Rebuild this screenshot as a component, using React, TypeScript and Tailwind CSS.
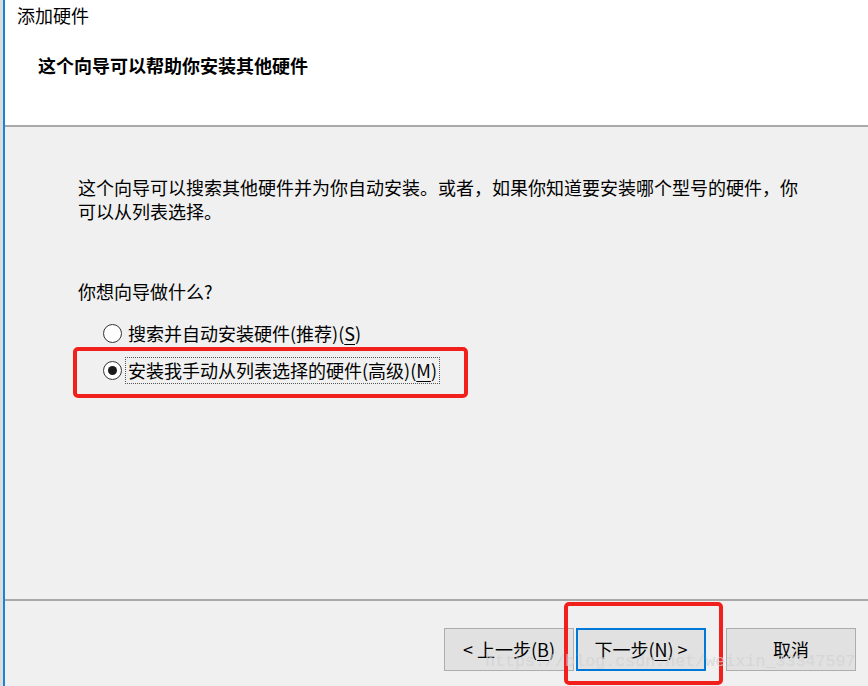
import React from "react";

// Windows "添加硬件" wizard page, with the two red highlight boxes drawn over it.

const font = { fontFamily: '"Noto Sans CJK SC", "Noto Sans", sans-serif' };

const Key = ({ k }: { k: string }) => <span className="underline underline-offset-[3px]">{k}</span>;

const Radio = ({ checked }: { checked?: boolean }) => (
  <span className="w-[19px] h-[19px] rounded-full border-[1.5px] border-[#333333] bg-white flex items-center justify-center shrink-0">
    {checked && <span className="w-[9px] h-[9px] rounded-full bg-[#1a1a1a]" />}
  </span>
);

const Button = ({ children, primary }: { children: React.ReactNode; primary?: boolean }) => (
  <div
    className={
      "w-[130px] h-[43px] flex items-center justify-center bg-[#e1e1e1] text-[18px] text-black " +
      (primary ? "border-2 border-[#0078d7]" : "border border-[#adadad]")
    }
  >
    {children}
  </div>
);

export default function App() {
  return (
    <div className="w-[868px] h-[686px] flex relative overflow-hidden bg-[#f0f0f0]" style={font}>
      {/* window edge */}
      <div className="w-[3px] bg-[#dcdcdc]" />
      <div className="w-[2px] bg-[#1883d7]" />

      <div className="flex-1 flex flex-col">
        {/* header */}
        <div className="h-[125px] bg-white flex flex-col">
          <p className="pl-[12px] pt-[3px] text-[18px] leading-[24px] text-black">添加硬件</p>
          <p className="pl-[33px] mt-[26px] text-[18px] leading-[24px] font-bold text-black">这个向导可以帮助你安装其他硬件</p>
        </div>
        <div className="h-[2px] bg-[#a9a9a9]" />

        {/* body */}
        <div className="flex-1 pl-[73px] pt-[48px] text-[18px] text-black">
          <p className="leading-[24px]">
            这个向导可以搜索其他硬件并为你自动安装。或者，如果你知道要安装哪个型号的硬件，你
            <br />
            可以从列表选择。
          </p>
          <p className="mt-[56px] leading-[24px]">你想向导做什么?</p>

          <div className="mt-[18px] pl-[25px] flex flex-col gap-[13px]">
            <div className="flex items-center h-[24px]">
              <Radio />
              <span className="ml-[6px] leading-[24px]">
                搜索并自动安装硬件(推荐)(<Key k="S" />)
              </span>
            </div>
            <div className="flex items-center h-[24px]">
              <Radio checked />
              <span className="ml-[3px] px-[2px] h-[27px] leading-[25px] border border-dotted border-[#555555]">
                安装我手动从列表选择的硬件(高级)(<Key k="M" />)
              </span>
            </div>
          </div>
        </div>

        <div className="h-[2px] bg-[#a9a9a9]" />

        {/* footer buttons */}
        <div className="h-[85px] flex items-start justify-end pt-[27px] pr-[12px]">
          <div className="flex gap-[2px]">
            <Button>
              &lt; 上一步(<Key k="B" />)
            </Button>
            <Button primary>
              下一步(<Key k="N" />) &gt;
            </Button>
          </div>
          <div className="ml-[20px]">
            <Button>取消</Button>
          </div>
        </div>
      </div>

      {/* red highlight boxes */}
      <div className="absolute left-[73px] top-[347px] w-[395px] h-[51px] border-4 border-[#f2201c] rounded-[5px]" />
      <div className="absolute left-[564px] top-[602px] w-[159px] h-[83px] border-4 border-[#f2201c] rounded-[5px]" />

      {/* blog watermark */}
      <div
        className="absolute left-[485px] top-[651px] text-[16.7px] leading-[22px] text-[#d2d2d2] opacity-70 whitespace-nowrap"
        style={{ fontFamily: '"Liberation Mono", monospace' }}
      >
        https://blog.csdn.net/weixin_33347597
      </div>
    </div>
  );
}
